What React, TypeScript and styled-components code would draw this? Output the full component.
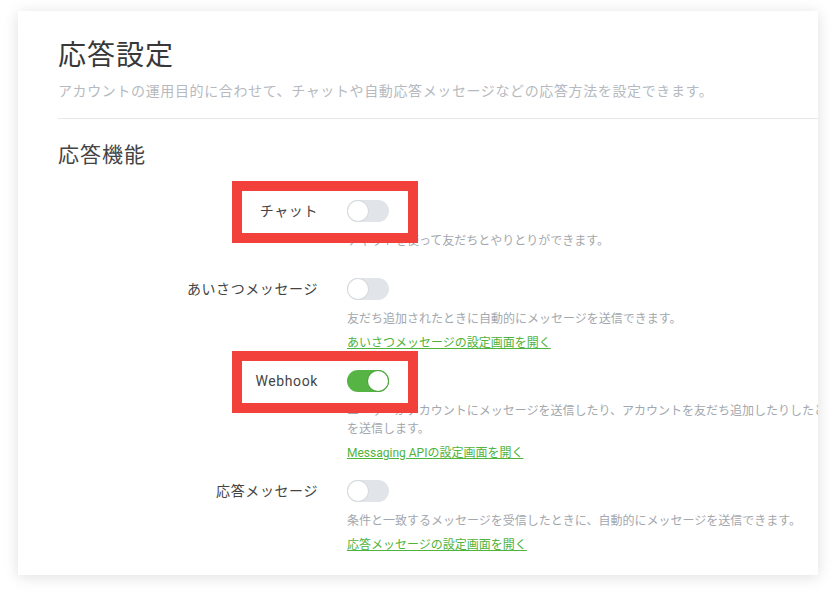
import { createGlobalStyle } from "styled-components";
import styled from "styled-components";

const GlobalStyle = createGlobalStyle`
  html, body {
    margin: 0;
    padding: 0;
    background: #ffffff;
  }
  body {
    font-family: Roboto, "Noto Sans CJK JP", sans-serif;
    -webkit-font-smoothing: antialiased;
  }
`;

export const Page = styled.div`
  padding: 11px 18px 24px 18px;
  width: 836px;
  box-sizing: border-box;
`;

export const Card = styled.section`
  width: 800px;
  height: 564px;
  box-sizing: border-box;
  background: #fff;
  box-shadow: 0 2px 14px rgba(0, 0, 0, 0.13);
  padding: 25px 0 0 40px;
  overflow: hidden;
`;

export const Title = styled.h1`
  margin: 0;
  font-size: 28px;
  line-height: 40px;
  font-weight: 400;
  letter-spacing: 1px;
  color: #383838;
`;

export const Lead = styled.p`
  margin: 5px 0 0;
  font-size: 14px;
  line-height: 20px;
  letter-spacing: 0.62px;
  color: #b6bac0;
`;

export const Divider = styled.hr`
  margin: 17px 0 0;
  border: 0;
  border-top: 1px solid #e6e7e9;
`;

export const SectionTitle = styled.h2`
  margin: 21px 0 0;
  font-size: 21px;
  line-height: 30px;
  font-weight: 400;
  letter-spacing: 1px;
  color: #444;
`;

export const Rows = styled.div`
  margin-top: 30px;
  display: flex;
  flex-direction: column;
  gap: 18px;
`;

export const Row = styled.div`
  position: relative;
  display: grid;
  grid-template-columns: 260px 1fr;
  column-gap: 29px;
`;

export const Label = styled.div`
  text-align: right;
  font-size: 14px;
  line-height: 22px;
  letter-spacing: 0.6px;
  color: #444;
`;

export const Body = styled.div`
  display: flex;
  flex-direction: column;
  align-items: flex-start;
`;

export const Toggle = styled.div<{ $on?: boolean }>`
  position: relative;
  width: 42px;
  height: 22px;
  border-radius: 11px;
  background: ${(p) => (p.$on ? "#55b443" : "#e1e4e8")};
  flex-shrink: 0;

  &::after {
    content: "";
    position: absolute;
    top: 1px;
    left: ${(p) => (p.$on ? "21px" : "1px")};
    width: 20px;
    height: 20px;
    border-radius: 50%;
    background: #fff;
    box-shadow: 0 0 0 1px ${(p) => (p.$on ? "#4da63c" : "#d7dade")};
  }
`;

export const Description = styled.div<{ $extra?: number }>`
  margin-top: 10px;
  margin-bottom: ${(p) => p.$extra ?? 0}px;
  font-size: 12px;
  line-height: 18px;
  color: #a3a8ae;
  white-space: nowrap;
`;

export const SettingLink = styled.a`
  margin-top: 6px;
  font-size: 12px;
  line-height: 18px;
  color: #4fb33c;
  text-decoration: underline;
  cursor: pointer;
`;

export const Highlight = styled.div`
  position: absolute;
  left: 174px;
  top: -19px;
  width: 186px;
  height: 62px;
  box-sizing: border-box;
  border: 10px solid #f2413a;
  pointer-events: none;
`;

type Item = {
  label: string;
  on?: boolean;
  desc: string[];
  link?: string;
  marked?: boolean;
  extra?: number;
};

const items: Item[] = [
  {
    label: "チャット",
    desc: ["チャットを使って友だちとやりとりができます。"],
    marked: true,
    extra: 10,
  },
  {
    label: "あいさつメッセージ",
    desc: ["友だち追加されたときに自動的にメッセージを送信できます。"],
    link: "あいさつメッセージの設定画面を開く",
  },
  {
    label: "Webhook",
    on: true,
    desc: [
      "ユーザーがアカウントにメッセージを送信したり、アカウントを友だち追加したりしたときに、Webhook URLにイベント",
      "を送信します。",
    ],
    link: "Messaging APIの設定画面を開く",
    marked: true,
  },
  {
    label: "応答メッセージ",
    desc: ["条件と一致するメッセージを受信したときに、自動的にメッセージを送信できます。"],
    link: "応答メッセージの設定画面を開く",
  },
];

export default function App() {
  return (
    <>
      <GlobalStyle />
      <Page>
        <Card>
          <Title>応答設定</Title>
          <Lead>
            アカウントの運用目的に合わせて、チャットや自動応答メッセージなどの応答方法を設定できます。
          </Lead>
          <Divider />
          <SectionTitle>応答機能</SectionTitle>
          <Rows>
            {items.map((it) => (
              <Row key={it.label}>
                <Label>{it.label}</Label>
                <Body>
                  <Toggle $on={it.on} />
                  <Description $extra={it.extra}>
                    {it.desc.map((line, i) => (
                      <div key={i}>{line}</div>
                    ))}
                  </Description>
                  {it.link && <SettingLink>{it.link}</SettingLink>}
                </Body>
                {it.marked && <Highlight />}
              </Row>
            ))}
          </Rows>
        </Card>
      </Page>
    </>
  );
}
